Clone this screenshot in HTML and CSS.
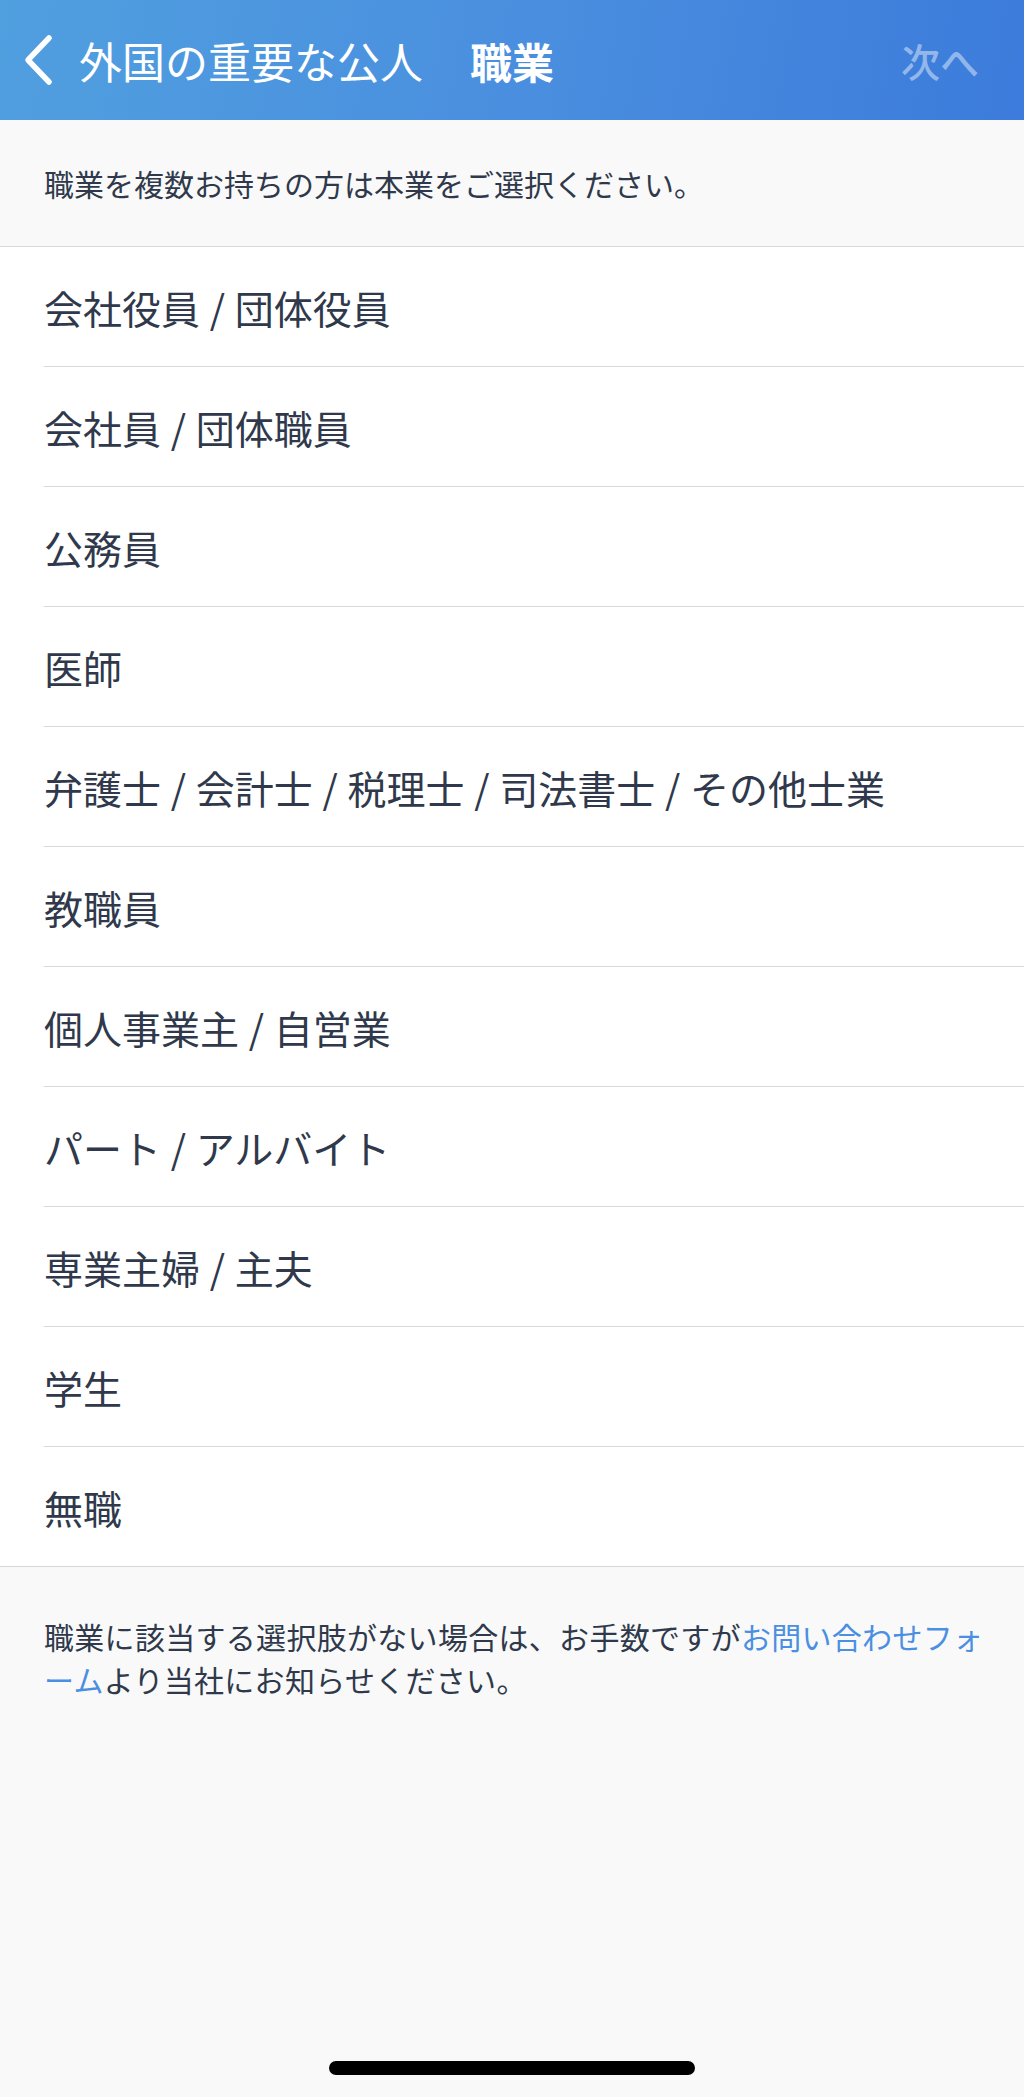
FILE: index.html
```html
<!DOCTYPE html>
<html lang="ja">
<head>
    <meta charset="UTF-8">
    <meta name="viewport" content="width=device-width, initial-scale=1.0">
    <title>職業</title>
    <link rel="stylesheet" href="styles.css">
</head>
<body>
    <!-- Barra de navegación -->
    <div class="nav-bar">
        <div class="nav-back">
            <svg class="chevron" width="32" height="52" viewBox="0 0 32 52">
                <path d="M27 4 L6 26 L27 48" fill="none" stroke="#fff" stroke-width="5.5" stroke-linecap="round" stroke-linejoin="round"/>
            </svg>
            <span class="back-label">外国の重要な公人</span>
        </div>
        <div class="nav-title">職業</div>
        <div class="nav-next">次へ</div>
    </div>

    <!-- Texto de ayuda -->
    <div class="intro">職業を複数お持ちの方は本業をご選択ください。</div>

    <!-- Lista de ocupaciones -->
    <ul class="job-list">
        <li>会社役員 / 団体役員</li>
        <li>会社員 / 団体職員</li>
        <li>公務員</li>
        <li>医師</li>
        <li>弁護士 / 会計士 / 税理士 / 司法書士 / その他士業</li>
        <li>教職員</li>
        <li>個人事業主 / 自営業</li>
        <li>パート / アルバイト</li>
        <li>専業主婦 / 主夫</li>
        <li>学生</li>
        <li>無職</li>
    </ul>

    <!-- Nota inferior -->
    <div class="footer">
        <p class="note">職業に該当する選択肢がない場合は、お手数ですが<a href="#">お問い合わせフォ<br>ーム</a>より当社にお知らせください。</p>
        <div class="home-indicator"></div>
    </div>
</body>
</html>
```

FILE: styles.css
```css
body {
    margin: 0;
    min-height: 100vh;
    display: flex;
    flex-direction: column;
    background-color: #f9f9f9;
    color: #2f394b;
    font-family: "Noto Sans CJK JP", "Noto Sans", sans-serif;
}

/* Barra de navegación */
.nav-bar {
    height: 120px;
    display: grid;
    grid-template-columns: 1fr auto 1fr;
    align-items: center;
    background: linear-gradient(100deg, #509fdf 0%, #4a8fdf 50%, #3c7bdb 100%);
    color: white;
    font-size: 42px;
}

.nav-back {
    display: flex;
    align-items: center;
    padding-left: 22px;
}

.chevron {
    display: block;
    margin-right: 25px;
}

.back-label {
    white-space: nowrap;
    font-size: 43px;
}

.nav-title {
    font-weight: bold;
}

.nav-next {
    justify-self: end;
    padding-right: 45px;
    font-size: 39px;
    color: rgba(255, 255, 255, 0.45);
    font-weight: 500;
}

/* Texto de ayuda */
.intro {
    padding: 42px 44px;
    font-size: 30px;
    line-height: 42px;
    border-bottom: 1px solid #d9d9d9;
}

/* Lista */
.job-list {
    list-style: none;
    margin: 0;
    padding: 0 0 0 44px;
    background-color: #fff;
    border-bottom: 1px solid #d6d6d6;
}

.job-list li {
    box-sizing: border-box;
    height: 120px;
    display: flex;
    align-items: center;
    font-size: 39px;
    word-spacing: 1px;
    border-bottom: 1px solid #d9d9d9;
}

.job-list li:last-child {
    height: 119px;
    border-bottom: none;
}

/* Nota inferior */
.footer {
    flex: 1;
    display: flex;
    flex-direction: column;
    padding: 48px 0 22px;
}

.note {
    margin: 0;
    padding: 0 30px 0 44px;
    font-size: 30px;
    letter-spacing: 0.3px;
    line-height: 43px;
}

.note a {
    color: #4a8fe2;
    text-decoration: none;
}

.home-indicator {
    margin: auto auto 0;
    width: 366px;
    height: 14px;
    border-radius: 7px;
    background-color: #000;
}
```
